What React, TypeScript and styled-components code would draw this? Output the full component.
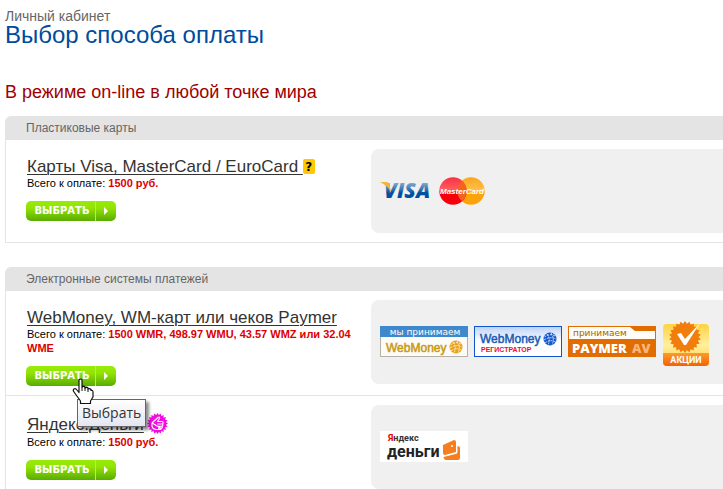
import React from "react";
import styled, { createGlobalStyle } from "styled-components";

const GlobalStyle = createGlobalStyle`
  html { scrollbar-width: none; }
  body {
    margin: 0;
    background: #fff;
    color: #000;
    font-family: "Liberation Sans", Arial, sans-serif;
  }
`;

const Page = styled.main`
  padding: 8px 0 0 5px;
`;

const Crumb = styled.p`
  margin: 0;
  font-size: 14px;
  line-height: 16px;
  color: #666;
`;

const PageTitle = styled.h1`
  margin: 0 0 36px;
  font-size: 24px;
  line-height: 22px;
  font-weight: normal;
  color: #004b9b;
`;

const Lead = styled.h2`
  margin: 0 0 14px;
  font-size: 18px;
  line-height: 20px;
  font-weight: normal;
  color: #a00000;
`;

const Panel = styled.section`
  margin-bottom: 24px;
`;

const PanelTitle = styled.h3`
  margin: 0;
  padding-left: 21px;
  font-size: 12px;
  line-height: 24px;
  font-weight: normal;
  color: #666;
  background: #e4e4e4;
  border-top-left-radius: 6px;
`;

const Method = styled.div`
  display: grid;
  grid-template-columns: 344px 1fr;
  align-items: start;
  padding: 9px 0 9px 21px;
  border-left: 1px solid #e4e4e4;
  border-bottom: 1px solid #e4e4e4;
`;

const Info = styled.div`
  padding: 8px 18px 0 0;
`;

const MethodTitle = styled.div`
  display: flex;
  align-items: center;
  font-size: 17px;
  line-height: 19px;
  white-space: pre;
`;

const MethodLink = styled.a`
  color: #333;
  text-decoration: underline;
  text-decoration-thickness: 1px;
  text-underline-offset: 2px;
`;

const Total = styled.p`
  margin: 0 0 11px;
  font-size: 11px;
  line-height: 14px;
`;

const Amount = styled.strong`
  color: #dd0000;
`;

const ButtonWrap = styled.div`
  position: relative;
  display: inline-block;
  margin-left: -1px;
  vertical-align: top;
`;

const SelectButton = styled.button`
  display: flex;
  align-items: center;
  width: 90px;
  height: 20px;
  padding: 0;
  border: 0;
  border-radius: 5px;
  background: linear-gradient(#98ec08, #93e305 35%, #58ac00);
  color: #fff;
  font: bold 10px/20px "DejaVu Sans", Verdana, sans-serif;
  cursor: pointer;
`;

const ButtonLabel = styled.span`
  flex: 1;
  text-align: center;
  padding-left: 3px;
`;

const ButtonArrow = styled.span`
  display: grid;
  place-items: center;
  width: 20px;
  height: 20px;
  border-left: 1px solid #b4f04c;
`;

const Tooltip = styled.span`
  position: absolute;
  z-index: 2;
  left: 51px;
  top: 33px;
  padding: 0 4px;
  border: 1px solid #666;
  background: linear-gradient(#fff, #e4e5f0);
  box-shadow: 3px 3px 3px rgba(0, 0, 0, 0.45);
  color: #333;
  font: 14px/26px "Open Sans", "Noto Sans", sans-serif;
`;

const Pointer = styled.svg`
  position: absolute;
  z-index: 3;
  left: 46px;
  top: 12px;
`;

const Logos = styled.div`
  display: flex;
  align-items: center;
  gap: 6px;
  height: 83px;
  padding: 0 0 1px 9px;
  border-radius: 8px 0 0 8px;
  background: #f0f0f0;
`;

const HelpButton = styled.button`
  width: 12px;
  height: 15px;
  padding: 0;
  border: 0;
  border-radius: 2px;
  background: #ffc800;
  color: #000;
  font: bold 12px/14px "DejaVu Sans", Verdana, sans-serif;
`;

const Badge = styled.svg`
  margin-left: 3px;
`;

const verdana = '"DejaVu Sans", Verdana, sans-serif';
const sans = '"Liberation Sans", Arial, sans-serif';
const humanist = '"Open Sans", "Noto Sans", sans-serif';
const grotesque = "Roboto, sans-serif";

function star(cx: number, cy: number, outer: number, inner: number, n: number) {
  return Array.from({ length: n * 2 }, (_, i) => {
    const r = i % 2 ? inner : outer;
    const a = (Math.PI * i) / n;
    return `${(cx + r * Math.sin(a)).toFixed(2)},${(cy - r * Math.cos(a)).toFixed(2)}`;
  }).join(" ");
}

function VisaLogo() {
  return (
    <svg width="53" height="28" role="img" aria-label="Visa">
      <defs>
        <linearGradient id="visa" x1="0" y1="0" x2="0" y2="1">
          <stop offset="0.25" stopColor="#7fa9d2" />
          <stop offset="0.5" stopColor="#2e6fae" />
          <stop offset="0.6" stopColor="#00509f" />
        </linearGradient>
      </defs>
      <text x="4" y="21" fontFamily={humanist} fontSize="21" fontWeight="800" fontStyle="italic" fill="url(#visa)">VISA</text>
      <path d="M0 5h6q3 0 3.500 3l1.500 7Q8 9 0 5z" fill="#f6b33c" />
    </svg>
  );
}

function MasterCardLogo() {
  return (
    <svg width="46" height="28" role="img" aria-label="MasterCard">
      <defs>
        <linearGradient id="mcRed" x1="0" y1="0" x2="0" y2="1">
          <stop offset="0" stopColor="#f8333f" />
          <stop offset="0.45" stopColor="#ff5b62" />
          <stop offset="0.55" stopColor="#f6000b" />
        </linearGradient>
        <linearGradient id="mcGold" x1="0" y1="0" x2="0" y2="1">
          <stop offset="0" stopColor="#fba51c" />
          <stop offset="0.45" stopColor="#ffc04c" />
          <stop offset="0.55" stopColor="#fba30a" />
        </linearGradient>
      </defs>
      <circle cx="32" cy="14" r="13.700" fill="url(#mcGold)" />
      <circle cx="14" cy="14" r="13.700" fill="url(#mcRed)" />
      <path d="M23 3.700a13.700 13.700 0 0 1 0 20.600a13.700 13.700 0 0 1 0-20.600z" fill="#f6611d" />
      <text x="23" y="17" textAnchor="middle" fontFamily={sans} fontSize="8" fontWeight="bold" fontStyle="italic" fill="#fff">MasterCard</text>
    </svg>
  );
}

function Globe({ x, y, color }: { x: number; y: number; color: string }) {
  return (
    <g transform={`translate(${x} ${y})`}>
      <circle r="6.500" fill={color} />
      <g fill="none" stroke="#fff" strokeWidth="0.800" strokeDasharray="2 1">
        <path d="M-5.500-2Q0-6 5-3M-6 1Q0-3 6 0M-5 4Q0 0 5.500 3" />
        <path d="M-3-5Q1 0-2 6M1-6Q5 0 2 6" />
      </g>
    </g>
  );
}

function WebMoneyLogo() {
  return (
    <svg width="88" height="31" role="img" aria-label="WebMoney: мы принимаем">
      <rect x="0.500" y="0.500" width="87" height="30" fill="#fcfbf8" stroke="#b5b0a8" />
      <rect width="88" height="11" fill="#4088cc" />
      <text x="45" y="9" textAnchor="middle" fontFamily={verdana} fontSize="9" fill="#fff">мы принимаем</text>
      <text x="6" y="26" fontFamily={sans} fontSize="12" fill="#c89a14" stroke="#c89a14" strokeWidth="0.500">WebMoney</text>
      <Globe x={76} y={21} color="#eaa018" />
    </svg>
  );
}

function WebMoneyRegistrarLogo() {
  return (
    <svg width="88" height="31" role="img" aria-label="WebMoney регистратор">
      <defs>
        <linearGradient id="reg" x1="0" y1="0" x2="0" y2="1">
          <stop offset="0" stopColor="#bdd2f7" />
          <stop offset="0.5" stopColor="#fff" />
        </linearGradient>
      </defs>
      <rect x="0.500" y="0.500" width="87" height="30" fill="url(#reg)" stroke="#1155cc" />
      <text x="6" y="17" fontFamily={sans} fontSize="12" fill="#1c5cb4" stroke="#1c5cb4" strokeWidth="0.500">WebMoney</text>
      <Globe x={76} y={13} color="#1155cc" />
      <text x="7" y="26" fontFamily={sans} fontSize="7" fontWeight="bold" fill="#e8102a">РЕГИСТРАТОР</text>
    </svg>
  );
}

function PaymerLogo() {
  return (
    <svg width="88" height="31" role="img" aria-label="Paymer AV: принимаем">
      <rect width="88" height="31" fill="#e16c00" />
      <path d="M1 1h61l5 4h20v8H1z" fill="#fffdf5" />
      <text x="5" y="10" fontFamily={verdana} fontSize="9" fill="#a86400">принимаем</text>
      <text x="4" y="27" fontFamily={humanist} fontSize="13" fontWeight="800" fill="#fff">PAYMER</text>
      <text x="64" y="27" fontFamily={humanist} fontSize="13" fontWeight="800" fill="#f6b67c">AV</text>
    </svg>
  );
}

function PromoLogo() {
  return (
    <svg width="48" height="54" role="img" aria-label="Акции">
      <defs>
        <linearGradient id="promo" x1="0" y1="0" x2="0" y2="1">
          <stop offset="0" stopColor="#ffd23f" />
          <stop offset="0.5" stopColor="#fff0a0" />
          <stop offset="1" stopColor="#ffcb30" />
        </linearGradient>
        <linearGradient id="promoBar" x1="0" y1="0" x2="0" y2="1">
          <stop offset="0" stopColor="#ff9a2e" />
          <stop offset="1" stopColor="#f46300" />
        </linearGradient>
      </defs>
      <rect x="1" y="9" width="46" height="42" rx="4" fill="url(#promo)" />
      <path d="M1 38h46v9q0 4-4 4H5q-4 0-4-4z" fill="url(#promoBar)" />
      <polygon points={star(23, 22, 16, 13.5, 22)} fill="#f17d0c" />
      <path d="M15 19l4-1 4 6L38 8 24 30h-2z" fill="#fff" />
      <text x="24" y="48" textAnchor="middle" fontFamily={grotesque} fontSize="9" fontWeight="bold" fill="#fff">АКЦИИ</text>
    </svg>
  );
}

function YandexMoneyLogo() {
  return (
    <svg width="88" height="31" role="img" aria-label="Яндекс деньги">
      <rect width="88" height="31" fill="#fff" />
      <text x="8" y="10" fontFamily={grotesque} fontSize="9" fontWeight="700" fill="#333">
        <tspan fill="#e60000">Я</tspan>ндекс
      </text>
      <text x="7" y="26" fontFamily={grotesque} fontSize="16" fontWeight="700" fill="#222">деньги</text>
      <path d="M63 14l11-5q2 0 2 2v10l-11 3q-2 0-2-2z" fill="#f57f20" />
      <path d="M77.500 15q2.500 0 2.500 2v10q0 2-2 2H66q-2 0-2.500-3l12-3q2 0 2-2z" fill="#f57f20" />
      <circle cx="72" cy="15" r="1" fill="#fff" />
    </svg>
  );
}

function LikeBadge() {
  return (
    <Badge width="21" height="22" viewBox="0 0 21 22" role="img" aria-label="Рекомендуем">
      <polygon points={star(10.5, 10.5, 10.5, 8.5, 20)} fill="#f20ce0" />
      <path
        d="M5 10L11 4.500q2-1 1.500 1L10.500 8.500H15q1.200 0 1.200 1.200T15 11h-4.500M15.500 11q1 1.300-.3 2.200H11M15 13.200q.8 1.500-.5 2.100H11M14 15.300q.4 1.200-.8 1.200H9Q4 16 5 10z"
        fill="none" stroke="#fff" strokeWidth="1.100" strokeLinejoin="round"
      />
    </Badge>
  );
}

function HandPointer() {
  return (
    <Pointer width="24" height="28" viewBox="0 0 24 28" aria-hidden="true">
      <path
        d="M7 2q1.500-2 3 0v7q1.500-1.500 3 0v1q1.500-1.500 3 0v1q1.500-1 3 .5v1q2-.5 2 1.500v5l-2.500 4v2.500H8.500v-2.500L2 14q-1.500-2 0-3t3 1l2 2.500z"
        fill="#fff" stroke="#111" strokeWidth="1.200" strokeLinejoin="round"
      />
      <path d="M10 9v4M13 10v3M16 11v3" stroke="#111" strokeWidth="1" />
    </Pointer>
  );
}

type PayMethodProps = {
  title: string;
  amount: string;
  badge?: React.ReactNode;
  hovered?: boolean;
  children: React.ReactNode;
};

function PayMethod({ title, amount, badge, hovered, children }: PayMethodProps) {
  return (
    <Method>
      <Info>
        <MethodTitle>
          <MethodLink href="#pay">{title}</MethodLink>
          {badge}
        </MethodTitle>
        <Total>
          Всего к оплате: <Amount>{amount}</Amount>
        </Total>
        <ButtonWrap>
          <SelectButton type="button">
            <ButtonLabel>ВЫБРАТЬ</ButtonLabel>
            <ButtonArrow>
              <svg width="5" height="8" aria-hidden="true">
                <path d="M0 0l4 4-4 4z" fill="#fff" />
              </svg>
            </ButtonArrow>
          </SelectButton>
          {hovered && <Tooltip role="tooltip">Выбрать</Tooltip>}
          {hovered && <HandPointer />}
        </ButtonWrap>
      </Info>
      <Logos>{children}</Logos>
    </Method>
  );
}

export default function App() {
  return (
    <>
      <GlobalStyle />
      <Page>
        <Crumb>Личный кабинет</Crumb>
        <PageTitle>Выбор способа оплаты</PageTitle>
        <Lead>В режиме on-line в любой точке мира</Lead>
        <Panel>
          <PanelTitle>Пластиковые карты</PanelTitle>
          <PayMethod
            title="Карты Visa, MasterCard / EuroCard "
            amount="1500 руб."
            badge={<HelpButton type="button">?</HelpButton>}
          >
            <VisaLogo />
            <MasterCardLogo />
          </PayMethod>
        </Panel>
        <Panel>
          <PanelTitle>Электронные системы платежей</PanelTitle>
          <PayMethod
            title="WebMoney, WM-карт или чеков Paymer"
            amount="1500 WMR, 498.97 WMU, 43.57 WMZ или 32.04 WME"
            hovered
          >
            <WebMoneyLogo />
            <WebMoneyRegistrarLogo />
            <PaymerLogo />
            <PromoLogo />
          </PayMethod>
          <PayMethod title="Яндекс.Деньги" amount="1500 руб." badge={<LikeBadge />}>
            <YandexMoneyLogo />
          </PayMethod>
        </Panel>
      </Page>
    </>
  );
}
